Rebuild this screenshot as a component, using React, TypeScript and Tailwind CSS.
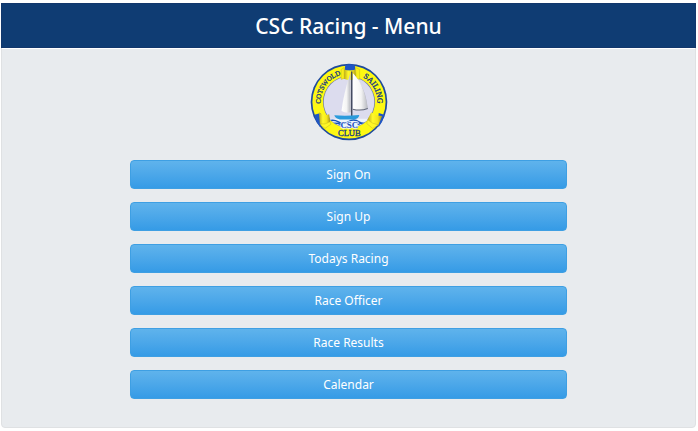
const menuItems = [
  { label: "Sign On" },
  { label: "Sign Up" },
  { label: "Todays Racing" },
  { label: "Race Officer" },
  { label: "Race Results" },
  { label: "Calendar" },
];

function ClubLogo() {
  return (
    <svg viewBox="29 25 228 228" className="h-[78px] w-[78px]" role="img" aria-label="Cotswold Sailing Club">
      <defs>
        <linearGradient id="sail" x1="0" y1="0" x2="1" y2="0">
          <stop offset="0" stopColor="#ffffff" />
          <stop offset="0.55" stopColor="#f4f4f4" />
          <stop offset="1" stopColor="#b4b6bd" />
        </linearGradient>
        <linearGradient id="ribbon" x1="0" y1="0" x2="1" y2="0">
          <stop offset="0" stopColor="#b9a51c" />
          <stop offset="0.35" stopColor="#fff92a" />
          <stop offset="0.7" stopColor="#f4e51a" />
          <stop offset="1" stopColor="#a08d24" />
        </linearGradient>
        <path id="leftArc" d="M 60 144 A 83 83 0 0 1 130 57" />
        <path id="rightArc" d="M 184 67 A 83 83 0 0 1 224 158" />
        <clipPath id="inner">
          <circle cx="143" cy="139" r="75" />
        </clipPath>
      </defs>

      {/* Ring */}
      <circle cx="143" cy="139" r="112" fill="#1f4a9c" />
      <circle cx="143" cy="139" r="107" fill="#fdf813" />
      <circle cx="143" cy="139" r="76" fill="#6a76a8" />
      <circle cx="143" cy="139" r="74" fill="#dcdcee" />

      {/* Water */}
      <g clipPath="url(#inner)">
        <path d="M60 188 H226 V220 H60Z" fill="#eef4fb" />
        <path
          d="M82 195 Q98 189 112 197 T142 196 T172 197 T208 194 M88 204 Q104 198 120 205 M168 205 Q184 198 204 203 M98 213 Q112 207 125 212 M164 212 Q178 207 194 212"
          fill="none"
          stroke="#1752bb"
          strokeWidth="4"
        />
      </g>

      {/* Top ribbon */}
      <path d="M132 32 Q145 26 160 32 L162 47 H130Z" fill="#1f55c4" />
      <path d="M129 43 Q145 53 162 43 L164 71 Q146 78 128 71Z" fill="url(#ribbon)" />
      <path d="M129 43 V70 L120 73 V44 L129 38Z M162 43 V38 L174 44 V73 L164 70Z" fill="#f9ee18" stroke="#a89c2a" strokeWidth="1" />

      {/* Boat */}
      <path d="M171 80 Q164 122 160 157 Q179 164 197 158 Q195 112 171 80Z" fill="#aaa9bd" opacity="0.75" />
      <path d="M147 54 Q128 110 121 165 Q134 173 148 169Z" fill="url(#sail)" />
      <path d="M154 54 Q188 88 198 157 Q173 166 154 160Z" fill="url(#sail)" />
      <path d="M149 50 H153 V181 H149Z" fill="#3c4358" />
      <path d="M154 160 Q177 166 198 158" fill="none" stroke="#626879" strokeWidth="3" />
      <path d="M100 178 Q136 181 173 177 Q172 189 155 190 H116 Q103 188 100 178Z" fill="#2b9bdc" />

      {/* Lower ribbons */}
      <path d="M42 176 L60 171 L62 205 L58 212 L48 196Z" fill="#1f55c4" />
      <path d="M55 169 Q69 181 85 175 L88 197 Q72 205 58 203Z" fill="url(#ribbon)" />
      <path d="M58 203 Q73 206 88 197 L90 204 L73 216 L62 208Z" fill="#fff726" stroke="#a89c2a" strokeWidth="1" />
      <path d="M246 176 L230 171 L226 205 L230 212 L240 196Z" fill="#1f55c4" />
      <path d="M208 169 Q220 180 240 180 L229 206 Q211 203 197 191Z" fill="url(#ribbon)" />
      <path d="M229 206 Q211 203 197 191 L195 202 L212 216 L224 209Z" fill="#fff726" stroke="#a89c2a" strokeWidth="1" />

      <g fill="#173b83" className="font-['Liberation_Serif',serif]">
        <g fontSize="20" stroke="#173b83" strokeWidth="1">
          <text>
            <textPath href="#leftArc">COTSWOLD</textPath>
          </text>
          <text fontSize="23">
            <textPath href="#rightArc">SAILING</textPath>
          </text>
          <text x="144" y="239" fontSize="25" textAnchor="middle">
            CLUB
          </text>
        </g>
        <text x="144" y="214" fontSize="26" fontWeight="700" textAnchor="middle" fill="#1c4ec0" stroke="#eef4fb" strokeWidth="4" paintOrder="stroke">
          CSC
        </text>
      </g>
    </svg>
  );
}

export default function App() {
  return (
    <div className="min-h-screen bg-white pt-[3px] pr-0.5 pb-1 pl-px font-['Noto_Sans','Open_Sans',sans-serif]">
      <main className="rounded border border-[#dfe1e3] bg-[#e8ebee]">
        {/* Header */}
        <header className="-mx-px -mt-px border border-[#12376c] bg-[#0f3c73] pt-1.5 pb-[5px] text-center">
          <h1 className="text-[21px] leading-8 font-medium text-white">CSC Racing - Menu</h1>
        </header>

        {/* Menu */}
        <div className="border-t border-white px-4 pt-3.5 pb-7">
          <div className="flex justify-center">
            <ClubLogo />
          </div>
          <nav className="mx-auto mt-[19px] flex w-[66%] flex-col gap-[13px]">
            {menuItems.map((item) => (
              <button
                key={item.label}
                type="button"
                className="h-[29px] rounded border border-[#3e9fe3] bg-linear-to-b from-[#5fb3ec] to-[#359be6] text-[12px] leading-5 text-white"
              >
                {item.label}
              </button>
            ))}
          </nav>
        </div>
      </main>
    </div>
  );
}
